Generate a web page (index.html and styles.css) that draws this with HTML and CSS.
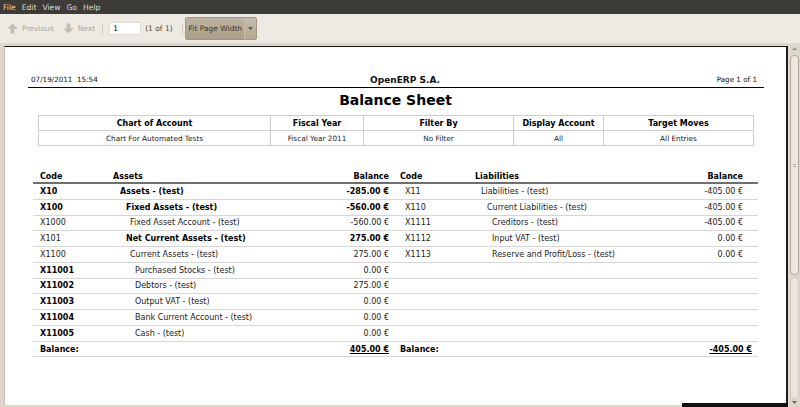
FILE: index.html
```html
<!DOCTYPE html>
<html>
<head>
<meta charset="utf-8">
<link rel="stylesheet" href="styles.css">
</head>
<body>
<div class="menubar">
  <span class="menu menu-first">File</span><span class="menu">Edit</span><span class="menu">View</span><span class="menu">Go</span><span class="menu">Help</span>
</div>
<div class="toolbar">
  <span class="tb-btn tb-prev">
    <svg class="tb-icon" width="11" height="11" viewBox="0 0 11 11"><path d="M5.5 0.5 L10.8 5.8 L7.4 5.8 L7.4 10.5 L3.6 10.5 L3.6 5.8 L0.2 5.8 Z" fill="#c2bdb4"/></svg>
    <span class="tb-dis">Previous</span>
  </span>
  <span class="tb-btn tb-next">
    <svg class="tb-icon" width="11" height="11" viewBox="0 0 11 11"><path d="M5.5 10.5 L10.8 5.2 L7.4 5.2 L7.4 0.5 L3.6 0.5 L3.6 5.2 L0.2 5.2 Z" fill="#c2bdb4"/></svg>
    <span class="tb-dis">Next</span>
  </span>
  <span class="tb-sep tb-sep1"></span>
  <span class="tb-input">1</span>
  <span class="tb-count">(1 of 1)</span>
  <span class="tb-sep tb-sep2"></span>
  <span class="tb-combo"><span class="tb-combo-text">Fit Page Width</span><span class="tb-combo-arrow"><svg width="5" height="4" viewBox="0 0 5 4"><path d="M0 0 L5 0 L2.5 3.5 Z" fill="#6b6254"/></svg></span></span>
</div>
<div class="viewer">
  <div class="page">
    <div class="rpt-head">
      <span class="rpt-date">07/19/2011  15:54</span>
      <span class="rpt-company">OpenERP S.A.</span>
      <span class="rpt-pager">Page 1 of 1</span>
    </div>
    <div class="rpt-title">Balance Sheet</div>
    <table class="summary">
      <colgroup><col class="c1"><col class="c2"><col class="c3"><col class="c4"><col class="c5"></colgroup>
      <tr><th>Chart of Account</th><th>Fiscal Year</th><th>Filter By</th><th>Display Account</th><th>Target Moves</th></tr>
      <tr><td>Chart For Automated Tests</td><td>Fiscal Year 2011</td><td>No Filter</td><td>All</td><td>All Entries</td></tr>
    </table>
    <div class="bs">
      <div class="bs-row bs-head">
        <span class="code">Code</span><span class="name">Assets</span><span class="bal">Balance</span>
        <span class="code r">Code</span><span class="name">Liabilities</span><span class="bal r">Balance</span>
      </div>
      <div class="bs-row">
        <span class="code b">X10</span><span class="name l1 b">Assets - (test)</span><span class="bal b">-285.00 €</span>
        <span class="code r rd">X11</span><span class="name m1">Liabilities - (test)</span><span class="bal r">-405.00 €</span>
      </div>
      <div class="bs-row">
        <span class="code b">X100</span><span class="name l2 b">Fixed Assets - (test)</span><span class="bal b">-560.00 €</span>
        <span class="code r rd">X110</span><span class="name m2">Current Liabilities - (test)</span><span class="bal r">-405.00 €</span>
      </div>
      <div class="bs-row">
        <span class="code">X1000</span><span class="name l3">Fixed Asset Account - (test)</span><span class="bal">-560.00 €</span>
        <span class="code r rd">X1111</span><span class="name m3">Creditors - (test)</span><span class="bal r">-405.00 €</span>
      </div>
      <div class="bs-row">
        <span class="code">X101</span><span class="name l2 b">Net Current Assets - (test)</span><span class="bal b">275.00 €</span>
        <span class="code r rd">X1112</span><span class="name m3">Input VAT - (test)</span><span class="bal r">0.00 €</span>
      </div>
      <div class="bs-row">
        <span class="code">X1100</span><span class="name l3">Current Assets - (test)</span><span class="bal">275.00 €</span>
        <span class="code r rd">X1113</span><span class="name m3">Reserve and Profit/Loss - (test)</span><span class="bal r">0.00 €</span>
      </div>
      <div class="bs-row">
        <span class="code b">X11001</span><span class="name l4">Purchased Stocks - (test)</span><span class="bal">0.00 €</span>
        <span class="code r"></span><span class="name"></span><span class="bal r"></span>
      </div>
      <div class="bs-row">
        <span class="code b">X11002</span><span class="name l4">Debtors - (test)</span><span class="bal">275.00 €</span>
        <span class="code r"></span><span class="name"></span><span class="bal r"></span>
      </div>
      <div class="bs-row">
        <span class="code b">X11003</span><span class="name l4">Output VAT - (test)</span><span class="bal">0.00 €</span>
        <span class="code r"></span><span class="name"></span><span class="bal r"></span>
      </div>
      <div class="bs-row">
        <span class="code b">X11004</span><span class="name l4">Bank Current Account - (test)</span><span class="bal">0.00 €</span>
        <span class="code r"></span><span class="name"></span><span class="bal r"></span>
      </div>
      <div class="bs-row">
        <span class="code b">X11005</span><span class="name l4">Cash - (test)</span><span class="bal">0.00 €</span>
        <span class="code r"></span><span class="name"></span><span class="bal r"></span>
      </div>
      <div class="bs-row bs-total">
        <span class="code b">Balance:</span><span class="name"></span><span class="bal b u">405.00 €</span>
        <span class="code r b">Balance:</span><span class="name"></span><span class="bal r rt b u">-405.00 €</span>
      </div>
    </div>
  </div>
  <div class="vgap"></div>
  <div class="scroll">
    <svg class="sc-arrow sc-up" width="5" height="3" viewBox="0 0 5 3"><path d="M0 3 L2.5 0 L5 3 Z" fill="#9d9587"/></svg>
    <div class="sc-thumb"><span class="sc-grip"></span></div>
    <div class="sc-fill"></div>
    <svg class="sc-arrow sc-down" width="5" height="3" viewBox="0 0 5 3"><path d="M0 0 L2.5 3 L5 0 Z" fill="#6d6558"/></svg>
  </div>
</div>
<div class="bottom-edge"></div>
</body>
</html>
```
FILE: styles.css
```css
* { box-sizing: border-box; }
html, body { margin: 0; padding: 0; }
body {
  width: 800px;
  height: 407px;
  overflow: hidden;
  position: relative;
  font-family: "DejaVu Sans", sans-serif;
  background: #ddd6c9;
}

/* menu bar */
.menubar {
  height: 14px;
  background: #3c3b37;
  display: flex;
  align-items: center;
  padding-left: 3px;
  gap: 6px;
  font-size: 7.6px;
  color: #dfdbd2;
}
.menu-first { color: #ecd9b8; }

/* toolbar */
.toolbar {
  height: 29px;
  background: #edeae4;
  display: flex;
  align-items: center;
  padding-left: 7px;
  font-size: 7.5px;
  color: #3c3b37;
}
.tb-btn { display: flex; align-items: center; gap: 4px; }
.tb-icon { display: block; }
.tb-dis { color: #aca79e; }
.tb-next { margin-left: 9px; }
.tb-sep { width: 1px; height: 10px; background: #cfc9bf; }
.tb-sep1 { margin-left: 7px; }
.tb-input {
  margin-left: 6px;
  width: 32px;
  height: 13px;
  background: #fff;
  border: 1px solid #e2ddd4;
  padding-left: 3px;
  line-height: 11px;
  color: #000;
}
.tb-count { margin-left: 4px; color: #4a4740; }
.tb-sep2 { margin-left: 9px; }
.tb-combo {
  margin-left: 2px;
  width: 72px;
  height: 23px;
  display: flex;
  border: 1px solid #a39681;
  border-radius: 2px;
  background: linear-gradient(#c0b4a1, #ab9e89);
}
.tb-combo-text {
  flex: 1;
  display: flex;
  align-items: center;
  padding-left: 3px;
  color: #3a3630;
  white-space: nowrap;
}
.tb-combo-arrow {
  width: 12px;
  display: flex;
  align-items: center;
  justify-content: center;
  border-left: 1px solid #c9bead;
  background: linear-gradient(#c6bba9, #b5a994);
}

/* viewer */
.viewer {
  height: 364px;
  display: flex;
  padding-left: 4px;
}
.page {
  width: 784px;
  margin-top: 3px;
  margin-bottom: 2px;
  background: #fff;
  border-top: 1px solid #111;
  border-left: 1px solid #c7bfb0;
  border-right: 2px solid #1c1c1c;
  overflow: hidden;
  padding-top: 28px;
  color: #111;
}
.vgap { width: 1px; background: #e6e1d8; }

/* report header */
.rpt-head {
  margin: 0 22px 0 23px;
  display: grid;
  grid-template-columns: 1fr auto 1fr;
  align-items: end;
  padding-bottom: 2px;
  border-bottom: 1px solid #000;
  line-height: 10px;
}
.rpt-date { font-size: 7.2px; white-space: pre; padding-left: 3px; }
.rpt-company { font-size: 9px; font-weight: bold; margin-left: 18px; }
.rpt-pager { font-size: 7.2px; text-align: right; padding-right: 7px; }

.rpt-title {
  margin-top: 3px;
  line-height: 18px;
  font-size: 14px;
  font-weight: bold;
  text-align: center;
  color: #000;
}

/* summary table */
.summary {
  margin: 6px 0 0 33px;
  border-collapse: collapse;
  table-layout: fixed;
  width: 715px;
}
.summary .c1 { width: 232px; }
.summary .c2 { width: 93px; }
.summary .c3 { width: 150px; }
.summary .c4 { width: 90px; }
.summary .c5 { width: 150px; }
.summary th, .summary td {
  border: 1px solid #cdcdcd;
  height: 15px;
  padding: 0;
  text-align: center;
  line-height: 13px;
}
.summary th { font-size: 8px; font-weight: bold; color: #000; }
.summary td { font-size: 7.3px; color: #222; }

/* balance sheet */
.bs {
  margin: 22px 0 0 28px;
  width: 725px;
  font-size: 8px;
}
.bs-row {
  display: grid;
  grid-template-columns: 80px 217px 63px 82px 225px 58px;
  align-items: center;
  height: 15.77px;
  border-bottom: 1px solid #d6d6d6;
  color: #222;
  white-space: nowrap;
}
.bs-head {
  height: 16px;
  align-items: end;
  padding-bottom: 1px;
  border-bottom: 2px solid #6f6f6f;
  font-weight: bold;
  color: #000;
}
.bs-row .code { padding-left: 7px; }
.bs-row .code.rd { padding-left: 12px; }
.bs-row .bal { text-align: right; padding-right: 4px; }
.bs-row .bal.r { padding-right: 15px; }
.bs-row .bal.rt { padding-right: 6px; }
.b { font-weight: bold; color: #000; }
.u { text-decoration: underline; }
.l1 { padding-left: 7px; }
.l2 { padding-left: 13px; }
.l3 { padding-left: 17px; }
.l4 { padding-left: 22px; }
.m1 { padding-left: 6px; }
.m2 { padding-left: 12px; }
.m3 { padding-left: 17px; }

/* scrollbar */
.scroll {
  width: 11px;
  background: #ddd6ca;
  display: flex;
  flex-direction: column;
  align-items: center;
}
.sc-arrow { display: block; flex: none; }
.sc-up { margin-top: 4px; }
.sc-thumb {
  margin-top: 5px;
  width: 9px;
  height: 220px;
  border: 1px solid #b2a999;
  border-radius: 4px;
  background: #ece8e1;
  display: flex;
  align-items: center;
  justify-content: center;
  flex: none;
}
.sc-grip {
  width: 3px;
  height: 3px;
  border-top: 1px solid #b2a999;
  border-bottom: 1px solid #b2a999;
}
.sc-fill {
  flex: 1;
  width: 9px;
  margin: 2px 0;
  border: 1px solid #d2cabd;
  border-radius: 4px;
  background: #e9e5de;
}
.sc-down { margin-bottom: 3px; }

.bottom-edge {
  position: absolute;
  left: 682px;
  top: 403px;
  width: 106px;
  height: 4px;
  background: #111;
}
```
